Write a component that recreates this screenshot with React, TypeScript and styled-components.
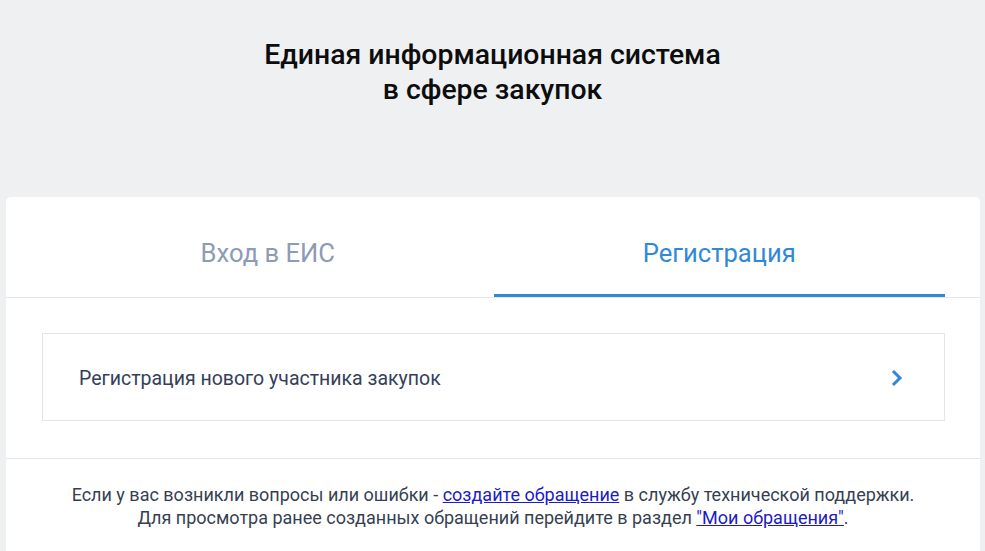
import React from "react";
import styled, { createGlobalStyle } from "styled-components";

const Global = createGlobalStyle`
  html, body { margin: 0; padding: 0; }
  body {
    background: #eef0f2;
    font-family: Roboto, "Liberation Sans", Arial, sans-serif;
    -webkit-font-smoothing: antialiased;
  }
`;

const Page = styled.div`
  display: flex;
  flex-direction: column;
  min-height: 551px;
`;

const Header = styled.header`
  height: 197px;
  box-sizing: border-box;
  padding-top: 37px;
  text-align: center;
`;

const Title = styled.h1`
  margin: 0;
  font-size: 28.4px;
  line-height: 35px;
  font-weight: 500;
  color: #0d0d0d;
`;

const Card = styled.main`
  margin: 0 5px 0 6px;
  background: #fff;
  border-radius: 5px 5px 0 0;
  flex: 1;
`;

const TabBar = styled.div`
  display: grid;
  grid-template-columns: 1fr 1fr;
  padding: 0 35px 0 36px;
  border-bottom: 1px solid #e4e7eb;
`;

const Tab = styled.div<{ $active?: boolean }>`
  height: 100px;
  box-sizing: border-box;
  padding-top: 41px;
  text-align: center;
  font-size: 25.6px;
  line-height: 30px;
  color: ${(p) => (p.$active ? "#3089d7" : "#8d9bb5")};
  border-bottom: 3px solid ${(p) => (p.$active ? "#3089d7" : "transparent")};
`;

const Body = styled.section`
  padding: 35px 35px 37px 36px;
  border-bottom: 1px solid #e4e7eb;
`;

const Item = styled.div`
  display: flex;
  align-items: center;
  justify-content: space-between;
  height: 88px;
  box-sizing: border-box;
  border: 1px solid #dfe4ed;
  padding: 2px 40px 0 36px;
  font-size: 19.5px;
  color: #344059;
`;

const Footer = styled.footer`
  padding: 24px 0 20px;
  text-align: center;
  font-size: 18px;
  line-height: 23px;
  color: #363f52;
`;

const Link = styled.a`
  color: #1b1bc8;
  text-decoration: underline;
`;

const Chevron = () => (
  <svg width="14" height="18" viewBox="0 0 14 18" fill="none">
    <polyline
      points="4,3 10,9 4,15"
      stroke="#2f88d8"
      strokeWidth="3"
      strokeLinecap="square"
      strokeLinejoin="miter"
    />
  </svg>
);

export default function App() {
  return (
    <>
      <Global />
      <Page>
        <Header>
          <Title>
            Единая информационная система
            <br />в сфере закупок
          </Title>
        </Header>
        <Card>
          <TabBar>
            <Tab>Вход в ЕИС</Tab>
            <Tab $active>Регистрация</Tab>
          </TabBar>
          <Body>
            <Item>
              <span>Регистрация нового участника закупок</span>
              <Chevron />
            </Item>
          </Body>
          <Footer>
            Если у вас возникли вопросы или ошибки -{" "}
            <Link href="#">создайте обращение</Link> в службу технической поддержки.
            <br />
            Для просмотра ранее созданных обращений перейдите в раздел{" "}
            <Link href="#">"Мои обращения"</Link>.
          </Footer>
        </Card>
      </Page>
    </>
  );
}
